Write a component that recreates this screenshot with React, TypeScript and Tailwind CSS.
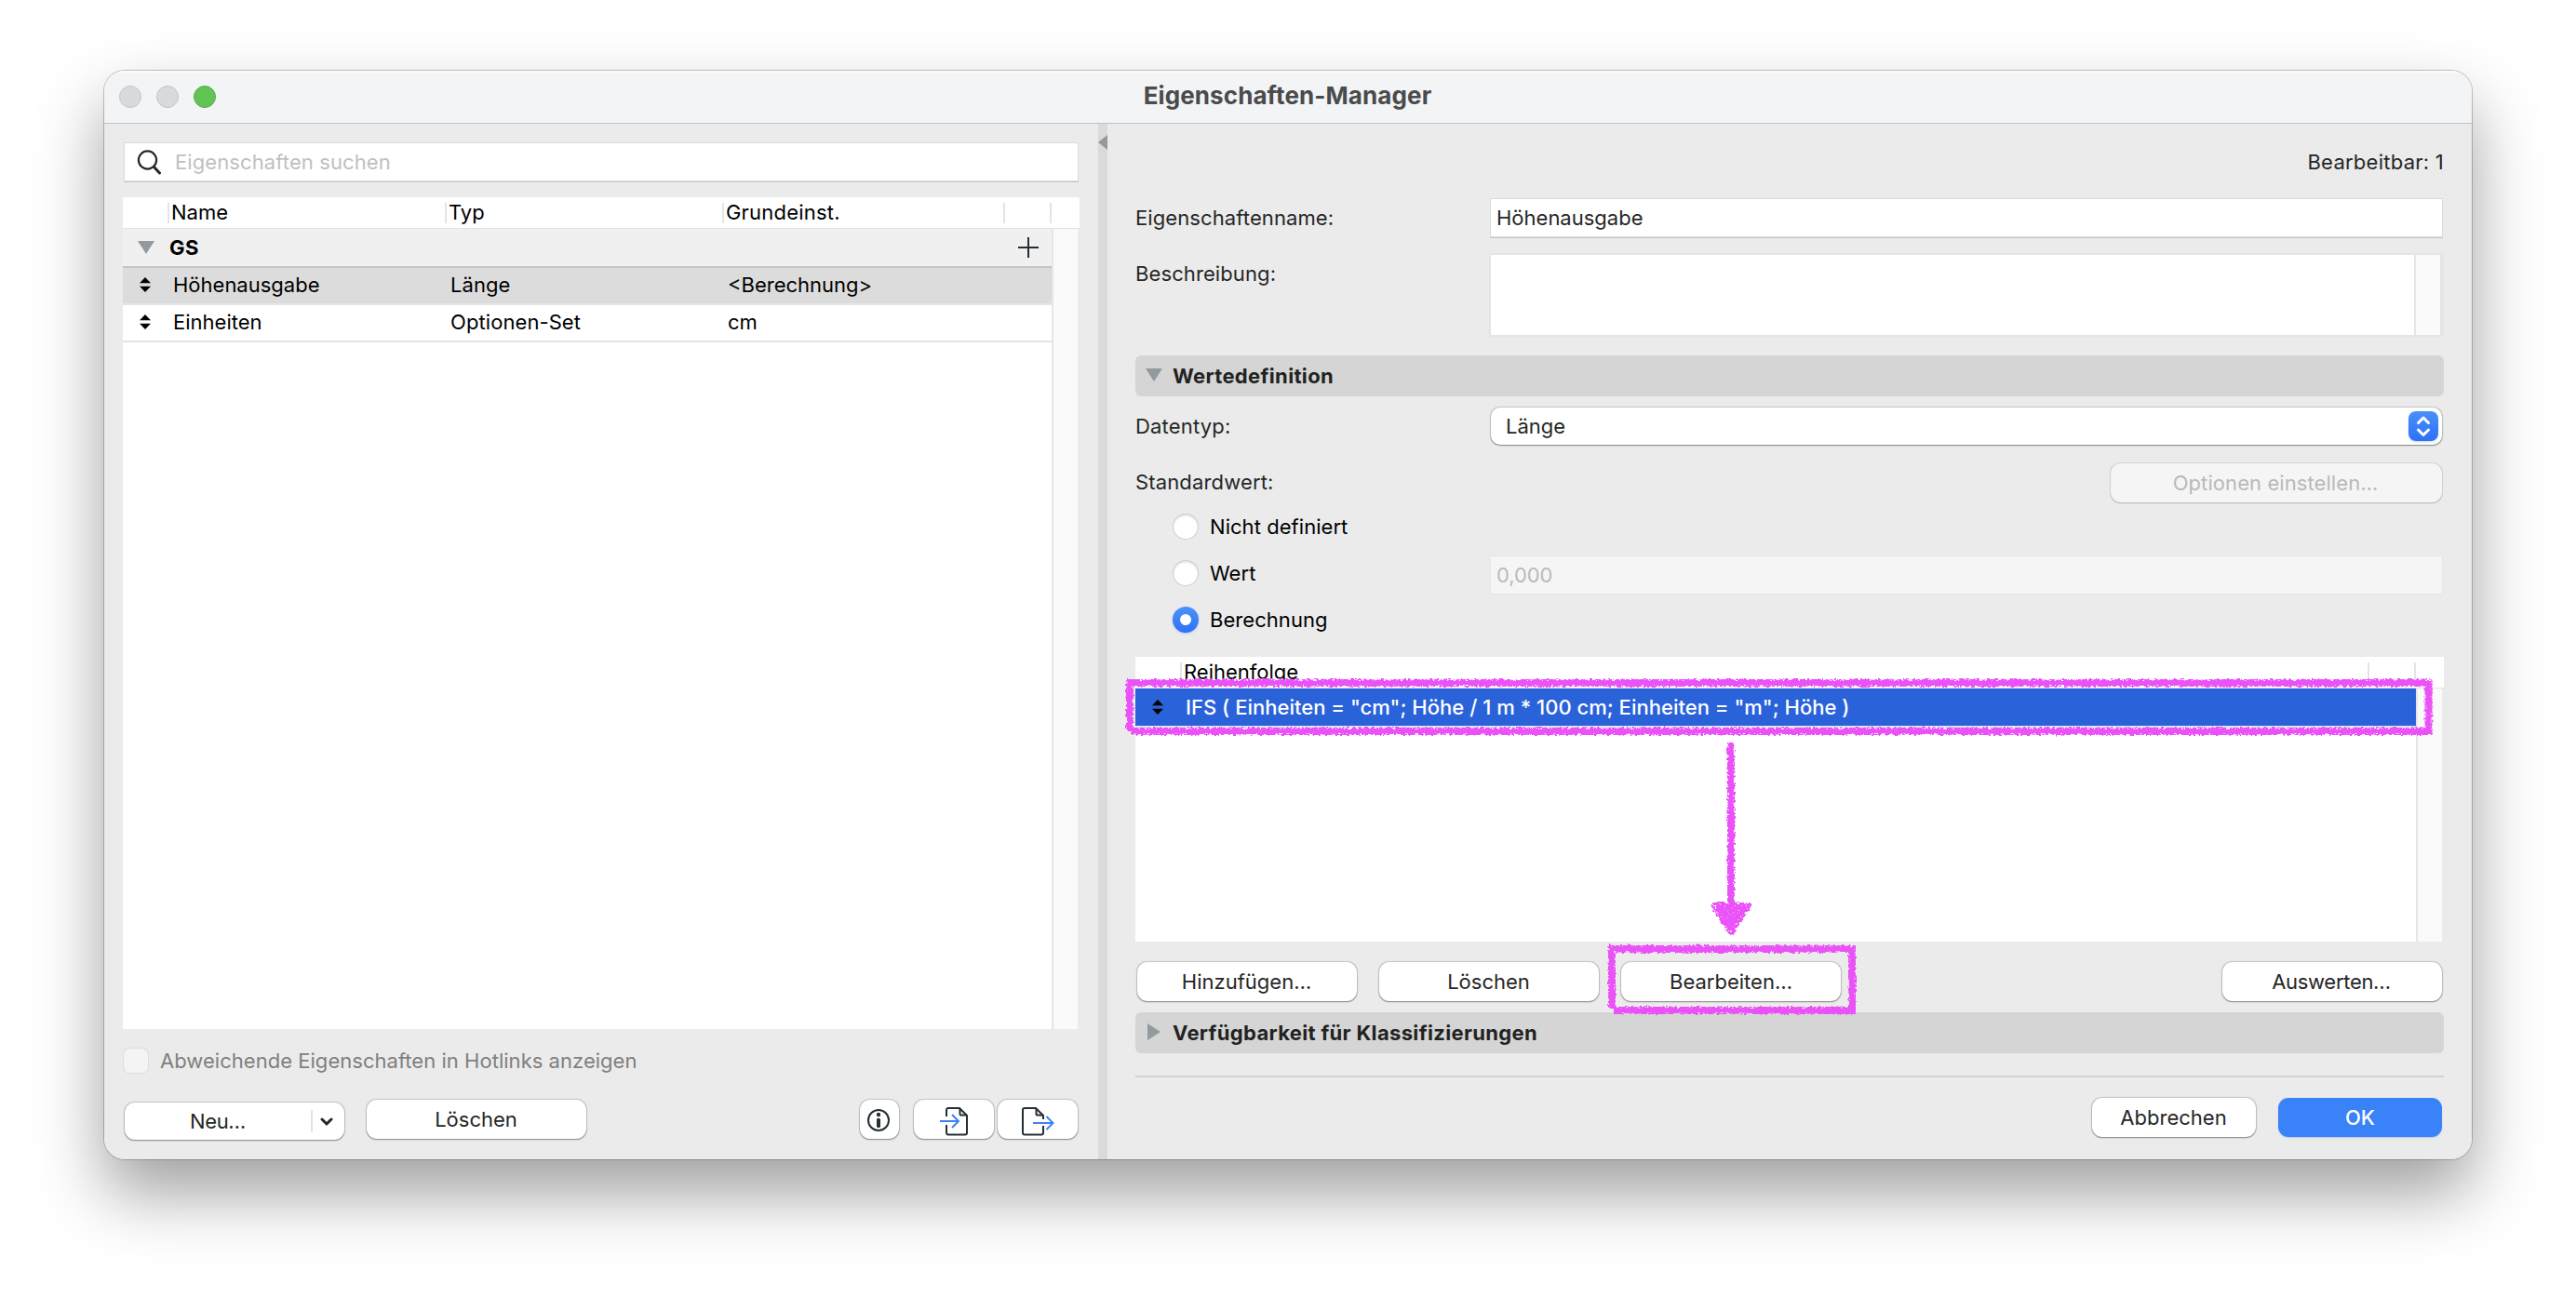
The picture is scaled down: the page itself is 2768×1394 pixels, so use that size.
import React from 'react';
import type { ReactNode } from 'react';

const BTN =
  'flex items-center justify-center rounded-[11px] bg-white text-[#262626] shadow-[0_0_1px_0.5px_rgba(0,0,0,0.16),0_1px_1.5px_rgba(0,0,0,0.32)]';
const FIELD =
  'bg-white shadow-[0_0_0_1px_#dadada,0_1px_0_1px_#c9c9c9,0_1px_0_0_#a9a9a9]';

function Triangle({ className, points, w, h }: { className: string; points: string; w: number; h: number }) {
  return (
    <svg className={className} width={w} height={h} viewBox={`0 0 ${w} ${h}`}>
      <polygon points={points} fill="#929a9d" />
    </svg>
  );
}

function DragArrows({ className }: { className: string }) {
  return (
    <svg className={className} width="12" height="16" viewBox="0 0 12 16">
      <path d="M6 0l6 6.2H0zM6 16l6-6.2H0z" fill="#000" />
    </svg>
  );
}

function PropertyRow({ name, type, value, selected }: { name: string; type: string; value: string; selected?: boolean }) {
  return (
    <div
      className={
        selected
          ? 'flex h-[40px] w-[998px] items-center border-b-2 border-[#e6e6e6] bg-[#dcdcdc] pb-[2px]'
          : 'flex h-[40px] w-[998px] items-center border-b-2 border-[#e4e4e4] bg-white pb-[2px]'
      }
    >
      <DragArrows className="mr-[24px] ml-[18px]" />
      <span className="w-[298px]">{name}</span>
      <span className="w-[298px] tracking-[0.08px]">{type}</span>
      <span>{value}</span>
    </div>
  );
}

function SectionHeader({ icon, children }: { icon: ReactNode; children: ReactNode }) {
  return (
    <div className="flex h-[44px] items-center rounded-[6px] bg-[#d5d5d5] font-bold tracking-[0.34px] text-[#222]">
      <div className="w-[40px]">{icon}</div>
      {children}
    </div>
  );
}

function Radio({ label, checked }: { label: string; checked?: boolean }) {
  return (
    <div className="flex h-[50px] w-[382px] items-center gap-3 pl-[40px] tracking-[0.05px] text-black">
      {checked ? (
        <span className="flex size-[28px] items-center justify-center rounded-full bg-linear-to-b from-[#4b93f8] to-[#2f70f6] shadow-[0_1px_2px_rgba(47,112,246,0.35)]">
          <span className="size-[12px] rounded-full bg-white" />
        </span>
      ) : (
        <span className="size-[28px] rounded-full bg-white shadow-[inset_0_0_0_1px_#cfcfcf,inset_0_2px_3px_rgba(0,0,0,0.14)]" />
      )}
      {label}
    </div>
  );
}

function ImportIcon() {
  return (
    <svg width="32" height="32" viewBox="0 0 32 32" fill="none" strokeWidth="2">
      <path d="M8 11V4a2 2 0 0 1 2-2h12l8 8v18.500a2 2 0 0 1-2 2H10a2 2 0 0 1-2-2V20" stroke="#242f35" />
      <path d="M22.500 2.500v6a1 1 0 0 0 1 1h6" stroke="#242f35" />
      <path d="M1 16h20M14 9l7 7-7 7" stroke="#3f80f7" />
    </svg>
  );
}

function ExportIcon() {
  return (
    <svg width="36" height="32" viewBox="0 0 36 32" fill="none" strokeWidth="2">
      <path d="M24 14v-4l-8-8H4a2 2 0 0 0-2 2v24.500a2 2 0 0 0 2 2h18a2 2 0 0 0 2-2V21" stroke="#242f35" />
      <path d="M16.500 2.500v6a1 1 0 0 0 1 1h6" stroke="#242f35" />
      <path d="M13 18h21M27.500 11l7 7-7 7" stroke="#3f80f7" />
    </svg>
  );
}

function InfoIcon() {
  return (
    <svg width="24" height="24" viewBox="0 0 24 24">
      <circle cx="12" cy="12" r="11" fill="none" stroke="#242f35" strokeWidth="2" />
      <circle cx="12" cy="6" r="2.200" fill="#242f35" />
      <rect x="10" y="9.700" width="4" height="10.300" rx="1.600" fill="#242f35" />
    </svg>
  );
}

function Annotations() {
  return (
    <svg className="pointer-events-none absolute top-0 left-0" width="2768" height="1394" viewBox="0 0 2768 1394" fill="none">
      <defs>
        <filter id="chalk" filterUnits="userSpaceOnUse" x="1190" y="710" width="1450" height="400" colorInterpolationFilters="sRGB">
          <feTurbulence type="fractalNoise" baseFrequency="0.35" numOctaves="2" seed="4" result="noise" />
          <feDisplacementMap in="SourceGraphic" in2="noise" scale="5" xChannelSelector="R" yChannelSelector="G" result="rough" />
          <feTurbulence type="fractalNoise" baseFrequency="0.4" numOctaves="2" seed="11" result="grain" />
          <feColorMatrix in="grain" type="matrix" values="0 0 0 0 0  0 0 0 0 0  0 0 0 0 0  9 0 0 0 -2.500" result="mask" />
          <feComposite in="rough" in2="mask" operator="in" result="speckled" />
          <feMerge>
            <feMergeNode in="speckled" />
          </feMerge>
        </filter>
      </defs>
      <g filter="url(#chalk)" stroke="#ea52f7" strokeWidth="8">
        <path d="M1214 786V734H2609.500V786H1216" />
        <path d="M1732 1084V1020H1990V1086H1734" />
        <path d="M1860 798V975" />
        <path d="M1842 973.500H1878L1860 1001z" fill="#ea52f7" strokeLinejoin="round" strokeWidth="7" />
      </g>
      {/* solid core under the chalky edge */}
      <g stroke="#ea52f7" strokeWidth="4">
        <path d="M1214 786V734H2609.500V786H1216" />
        <path d="M1732 1084V1020H1990V1086H1734" />
        <path d="M1860 800V975" />
        <path d="M1846 975.500H1874L1860 998z" fill="#ea52f7" fillOpacity="0.7" strokeOpacity="0.7" strokeLinejoin="round" />
      </g>
    </svg>
  );
}

function LeftPanel() {
  return (
    <div className="flex w-[1068px] flex-col pt-[21px] pl-[20px]">
      <div className={`${FIELD} ml-[2px] flex h-[40px] w-[1024px] items-center text-[#bfbfbf]`}>
        <svg className="mr-[15px] ml-[13px]" width="26" height="28" viewBox="0 0 26 28" fill="none" stroke="#262626" strokeLinecap="round">
          <circle cx="11.500" cy="12" r="9.600" strokeWidth="2.200" />
          <path d="M18.500 19.500l6 6.500" strokeWidth="3" />
        </svg>
        <span className="tracking-[0.1px]">Eigenschaften suchen</span>
      </div>

      <div className="mt-[18px] flex h-[34px] w-[1028px] items-center border-b border-[#e2e2e2] bg-white text-black">
        <div className="ml-[48px] h-[22px] w-[298px] border-l-2 border-[#e4e4e4] pl-[2px] leading-[20px]">Name</div>
        <div className="h-[22px] w-[298px] border-l-2 border-[#e4e4e4] pl-[2px] leading-[20px]">Typ</div>
        <div className="h-[22px] w-[302px] border-l-2 border-[#e4e4e4] pl-[2px] leading-[20px] tracking-[0.2px]">Grundeinst.</div>
        <div className="h-[22px] w-[50px] border-l-2 border-[#e4e4e4]" />
        <div className="h-[22px] border-l-2 border-[#e4e4e4]" />
      </div>
      <div className="flex h-[860px] w-[1026px]">
        <div className="w-[998px] bg-white text-black">
          <div className="flex h-[42px] items-center border-b-2 border-[#c5c5c5] bg-[#f0f0f0]">
            <Triangle className="mr-[16px] ml-[16px]" w={18} h={14} points="0,0 18,0 9,14" />
            <span className="flex-1 font-bold tracking-[0.6px]">GS</span>
            <svg className="mr-[14px]" width="22" height="22" viewBox="0 0 22 22" stroke="#242f35" strokeWidth="2">
              <path d="M11 0v22M0 11h22" />
            </svg>
          </div>
          <PropertyRow name="Höhenausgabe" type="Länge" value="<Berechnung>" selected />
          <PropertyRow name="Einheiten" type="Optionen-Set" value="cm" />
        </div>
        <div className="w-[28px] border-l-2 border-[#e6e6e6] bg-[#fafafa]" />
      </div>

      <div className="mt-5 flex h-[28px] items-center gap-3 tracking-[0.03px] text-[#7f7f7f]">
        <span className="size-[28px] rounded-[7px] bg-[#f4f4f4] shadow-[inset_0_0_0_1px_#dedede,inset_0_1px_2px_rgba(0,0,0,0.08)]" />
        Abweichende Eigenschaften in Hotlinks anzeigen
      </div>

      <div className="mt-7 flex pl-[2px]">
        <div className={`${BTN} mt-[3px] h-[40px] w-[236px]`}>
          <span className="w-[200px] text-center tracking-[-0.4px]">Neu…</span>
          <span className="h-[24px] w-[2px] bg-[#e3e3e3]" />
          <svg className="mr-auto ml-[8px]" width="14" height="9" viewBox="0 0 14 9" fill="none" stroke="#262626" strokeWidth="3" strokeLinecap="round" strokeLinejoin="round">
            <path d="M2 2l5 5 5-5" />
          </svg>
        </div>
        <div className={`${BTN} ml-6 h-[42px] w-[236px] pr-px`}>Löschen</div>
        <div className={`${BTN} ml-[294px] h-[42px] w-[42px] pt-px pr-[2px]`}>
          <InfoIcon />
        </div>
        <div className={`${BTN} ml-4 h-[42px] w-[86px] pt-[3px]`}>
          <ImportIcon />
        </div>
        <div className={`${BTN} ml-1 h-[42px] w-[86px] pt-[3px]`}>
          <ExportIcon />
        </div>
      </div>
    </div>
  );
}

function RightPanel() {
  return (
    <div className="flex w-[1466px] flex-col px-[30px] text-[#262626]">
      <div className="h-[81px] pt-[26px] text-right leading-[30px] tracking-[0.25px]">Bearbeitbar: 1</div>
      <div className="flex h-[40px] items-center">
        <span className="w-[382px] tracking-[0.1px]">Eigenschaftenname:</span>
        <div className={`${FIELD} flex h-[40px] w-[1022px] items-center pl-[6px]`}>Höhenausgabe</div>
      </div>
      <div className="mt-[18px] flex h-[90px]">
        <span className="w-[380px] leading-[44px] tracking-[0.1px]">Beschreibung:</span>
        <div className="flex w-[1026px] border-2 border-r-4 border-[#e5e5e5] bg-white">
          <div className="ml-auto w-[28px] border-l-2 border-[#e5e5e5] bg-[#fafafa]" />
        </div>
      </div>

      <div className="mt-5">
        <SectionHeader icon={<Triangle className="-mt-[3px] ml-[11px]" w={18} h={14} points="0,0 18,0 9,14" />}>
          Wertedefinition
        </SectionHeader>
      </div>

      <div className="mt-3 flex h-[40px] items-center">
        <span className="w-[382px] tracking-[0.19px]">Datentyp:</span>
        <div className="flex h-[40px] w-[1022px] items-center rounded-[10px] bg-white pr-1 pl-[16px] shadow-[0_0_1px_0.5px_rgba(0,0,0,0.16),0_1px_1.5px_rgba(0,0,0,0.32)]">
          <span className="flex-1">Länge</span>
          <span className="flex size-[32px] items-center justify-center rounded-[8px] bg-linear-to-b from-[#4a90f8] to-[#2f70f6] shadow-[0_1px_2px_rgba(47,112,246,0.3)]">
            <svg width="16" height="24" viewBox="0 0 16 24" fill="none" stroke="#fff" strokeWidth="3" strokeLinecap="round" strokeLinejoin="round">
              <path d="M2.500 8.500L8 3l5.500 5.500M2.500 16L8 21.500l5.500-5.500" />
            </svg>
          </span>
        </div>
      </div>

      <div className="mt-5 flex h-[42px] justify-between pr-[2px]">
        <span className="leading-[40px] tracking-[0.15px]">Standardwert:</span>
        <div className="flex h-[42px] w-[356px] items-center justify-center rounded-[11px] bg-[#f5f5f5] pr-[2px] tracking-[0.08px] text-[#b9b9b9] shadow-[0_0_1px_0.5px_rgba(0,0,0,0.1),0_1px_1.5px_rgba(0,0,0,0.14)]">
          Optionen einstellen…
        </div>
      </div>

      <div className="mt-px">
        <Radio label="Nicht definiert" />
        <div className="flex">
          <Radio label="Wert" />
          <div className="mt-[7px] flex h-[40px] w-[1022px] items-center bg-[#f5f5f5] pl-[6px] tracking-[-0.1px] text-[#bababa] shadow-[0_0_0_1px_#e6e6e6,0_1px_0_0_#d0d0d0]">
            0,000
          </div>
        </div>
        <Radio label="Berechnung" checked />
      </div>

      <div className="mt-[15px] flex h-[34px] items-start border-b border-[#e2e2e2] bg-white pt-[6px] text-black">
        <div className="ml-[48px] h-[22px] w-[1276px] border-l-2 border-[#e4e4e4] pl-[2px] leading-[20px]">Reihenfolge</div>
        <div className="h-[22px] w-[50px] border-l-2 border-[#e4e4e4]" />
        <div className="h-[22px] border-l-2 border-[#e4e4e4]" />
      </div>
      <div className="flex h-[272px] w-[1404px]">
        <div className="w-[1376px] bg-white">
          <div className="flex h-[42px] items-center border-b-2 border-[#e4e4e4] bg-[#2962d9] font-medium text-white">
            <DragArrows className="mr-[24px] ml-[18px]" />
            <span className="whitespace-pre tracking-[0.02px]">
              {'IFS ( Einheiten = "cm"; Höhe / 1 m * 100 cm; Einheiten = "m"; Höhe )'}
            </span>
          </div>
        </div>
        <div className="w-[28px] border-l-2 border-[#e6e6e6] bg-[#fafafa]" />
      </div>

      <div className="mt-[22px] flex gap-6 pr-[2px] pl-[2px]">
        <div className={`${BTN} h-[42px] w-[236px] pr-px`}>Hinzufügen…</div>
        <div className={`${BTN} h-[42px] w-[236px] pr-px`}>Löschen</div>
        <div className={`${BTN} h-[42px] w-[236px]`}>Bearbeiten…</div>
        <div className={`${BTN} ml-auto h-[42px] w-[236px] pr-[2px] tracking-[-0.3px]`}>Auswerten…</div>
      </div>

      <div className="mt-3">
        <SectionHeader icon={<Triangle className="-mt-[2px] ml-[13px]" w={14} h={18} points="0,0 14,9 0,18" />}>
          Verfügbarkeit für Klassifizierungen
        </SectionHeader>
      </div>
      <div className="mt-6 h-[2px] bg-[#d2d2d2]" />
      <div className="mt-[22px] flex justify-end gap-6 pr-[2px]">
        <div className={`${BTN} h-[42px] w-[176px] pr-px`}>Abbrechen</div>
        <div className="flex h-[42px] w-[176px] items-center justify-center rounded-[11px] bg-[#3a82f7] font-medium text-white shadow-[0_1px_1.5px_rgba(58,130,247,0.3)]">
          OK
        </div>
      </div>
    </div>
  );
}

export default function App() {
  return (
    <div className="relative h-[1394px] w-[2768px] overflow-hidden bg-white pt-[76px] pl-[112px] font-['Inter',sans-serif] text-[22px] leading-[28px]">
      <div className="h-[1170px] w-[2544px] rounded-[22px] shadow-[0_0_0_1px_rgba(0,0,0,0.22),0_36px_72px_rgba(0,0,0,0.38)]">
        <div className="flex h-full flex-col overflow-hidden rounded-[22px] bg-[#ebebeb]">
          <div className="grid h-[57px] grid-cols-3 items-center border-b border-[#c3c3c3] bg-[#f3f4f6] pl-4 shadow-[inset_0_2px_0_rgba(255,255,255,0.7)]">
            <div className="flex gap-4">
              <span className="size-[24px] rounded-full border border-[#c4c4c5] bg-[#d9dadb]" />
              <span className="size-[24px] rounded-full border border-[#c4c4c5] bg-[#d9dadb]" />
              <span className="size-[24px] rounded-full border border-[#57ac45] bg-[#61c454]" />
            </div>
            <div className="-mt-[2px] pr-[17px] text-center text-[26px] leading-[56px] font-bold tracking-[0.1px] text-[#4a4b4c]">
              Eigenschaften-Manager
            </div>
          </div>
          <div className="flex flex-1">
            <LeftPanel />
            <div className="w-[10px] bg-[#dadada] pt-[12px]">
              <Triangle className="block" w={10} h={16} points="10,0 10,16 0,8" />
            </div>
            <RightPanel />
          </div>
        </div>
      </div>
      <Annotations />
    </div>
  );
}
